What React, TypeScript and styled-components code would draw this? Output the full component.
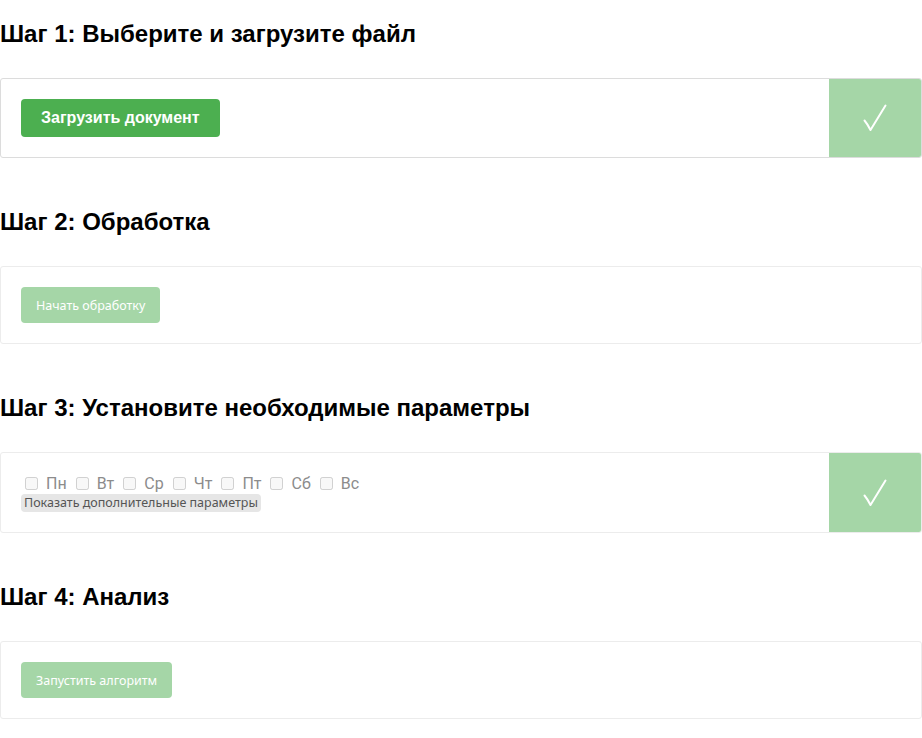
import React from "react";
import styled, { createGlobalStyle } from "styled-components";

const Global = createGlobalStyle`
  html, body { margin: 0; padding: 0; background: #fff; }
  body { font-family: "Liberation Sans", Arial, sans-serif; }
`;

const Page = styled.div`
  width: 922px;
  padding-top: 20px;
`;

const Step = styled.section`
  margin-bottom: 50px;
`;

const Title = styled.h2`
  margin: 0 0 30px 0;
  font-family: "Liberation Sans", Arial, sans-serif;
  font-size: 24px;
  line-height: 28px;
  font-weight: bold;
  color: #000;
`;

const Card = styled.div<{ $active?: boolean }>`
  display: flex;
  border: 1px solid ${(p) => (p.$active ? "#dcdcdc" : "#ececec")};
  border-radius: 3px;
  background: #fff;
  overflow: hidden;
`;

const Body = styled.div`
  flex: 1;
  padding: 20px;
  display: flex;
  flex-direction: column;
  align-items: flex-start;
`;

const Done = styled.div`
  width: 92px;
  background: #a5d6a7;
  display: flex;
  align-items: center;
  justify-content: center;
`;

const Check = () => (
  <svg width="24" height="28" viewBox="0 0 24 28" fill="none">
    <path
      d="M1.5 16.5 Q4.5 20 7.5 26 L22.5 1.5"
      stroke="#fff"
      strokeWidth="2"
      strokeLinecap="round"
      strokeLinejoin="round"
    />
  </svg>
);

const PrimaryButton = styled.button`
  height: 38px;
  padding: 0 20px;
  border: none;
  border-radius: 4px;
  background: #4caf50;
  color: #fff;
  font-family: "Liberation Sans", Arial, sans-serif;
  font-weight: bold;
  font-size: 16px;
`;

const DisabledButton = styled.button`
  height: 36px;
  padding: 0 15px;
  border: none;
  border-radius: 4px;
  background: #a5d6a7;
  color: #fff;
  font-family: "Noto Sans", sans-serif;
  font-size: 12.5px;
`;

const Days = styled.div`
  display: flex;
  align-items: center;
  height: 20px;
`;

const Day = styled.label`
  display: inline-flex;
  align-items: center;
  font-family: Roboto, sans-serif;
  font-size: 16px;
  color: #8c8c8c;
  margin-right: 5px;
`;

const Box = styled.input`
  margin: 3px 8px 3px 4px;
  width: 13px;
  height: 13px;
`;

const MoreButton = styled.button`
  margin-top: 1px;
  height: 18px;
  padding: 0 3px;
  border: none;
  border-radius: 4px;
  background: #e6e6e6;
  color: #555;
  font-family: "Noto Sans", sans-serif;
  font-size: 12.5px;
  line-height: 18px;
`;

const days = ["Пн", "Вт", "Ср", "Чт", "Пт", "Сб", "Вс"];

export default function App() {
  return (
    <Page>
      <Global />
      <Step>
        <Title>Шаг 1: Выберите и загрузите файл</Title>
        <Card $active>
          <Body>
            <PrimaryButton>Загрузить документ</PrimaryButton>
          </Body>
          <Done>
            <Check />
          </Done>
        </Card>
      </Step>
      <Step>
        <Title>Шаг 2: Обработка</Title>
        <Card>
          <Body>
            <DisabledButton disabled>Начать обработку</DisabledButton>
          </Body>
        </Card>
      </Step>
      <Step>
        <Title>Шаг 3: Установите необходимые параметры</Title>
        <Card>
          <Body>
            <Days>
              {days.map((d) => (
                <Day key={d}>
                  <Box type="checkbox" disabled />
                  {d}
                </Day>
              ))}
            </Days>
            <MoreButton>Показать дополнительные параметры</MoreButton>
          </Body>
          <Done>
            <Check />
          </Done>
        </Card>
      </Step>
      <Step>
        <Title>Шаг 4: Анализ</Title>
        <Card>
          <Body>
            <DisabledButton disabled>Запустить алгоритм</DisabledButton>
          </Body>
        </Card>
      </Step>
    </Page>
  );
}
